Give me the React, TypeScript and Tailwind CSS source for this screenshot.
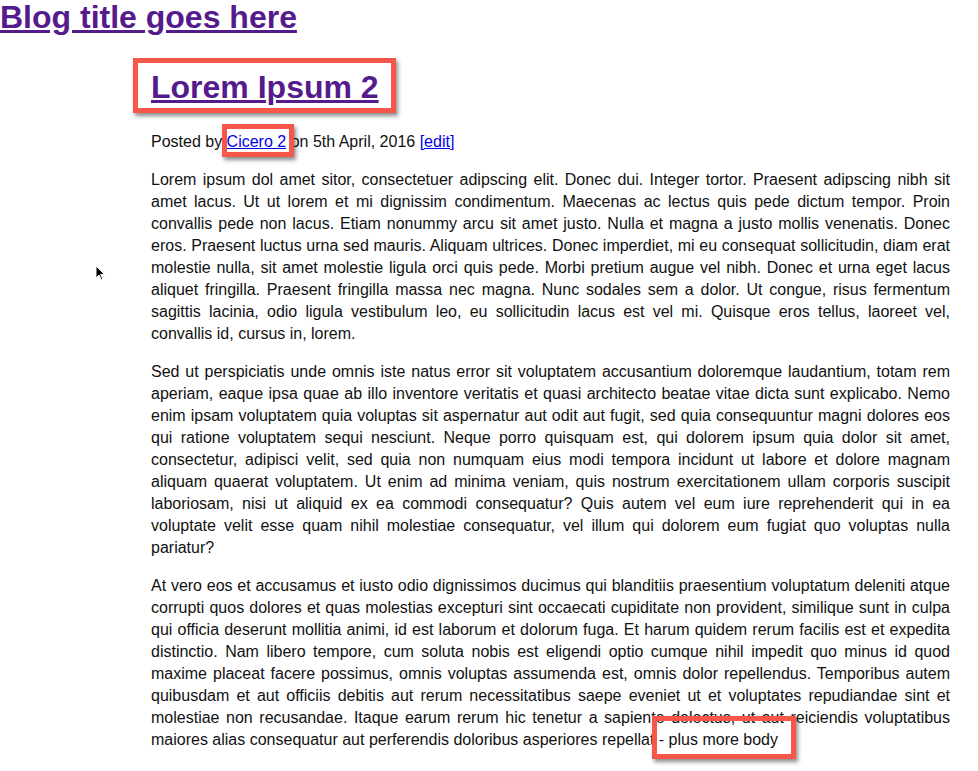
import React from "react"

function Callout({ className }: { className: string }) {
  return (
    <span
      aria-hidden
      className={`pointer-events-none absolute border-[5px] border-[#f7574a] shadow-[2px_3px_4px_rgba(0,0,0,0.45)] ${className}`}
    />
  )
}

const paragraphs = [
  "Lorem ipsum dol amet sitor, consectetuer adipscing elit. Donec dui. Integer tortor. Praesent adipscing nibh sit amet lacus. Ut ut lorem et mi dignissim condimentum. Maecenas ac lectus quis pede dictum tempor. Proin convallis pede non lacus. Etiam nonummy arcu sit amet justo. Nulla et magna a justo mollis venenatis. Donec eros. Praesent luctus urna sed mauris. Aliquam ultrices. Donec imperdiet, mi eu consequat sollicitudin, diam erat molestie nulla, sit amet molestie ligula orci quis pede. Morbi pretium augue vel nibh. Donec et urna eget lacus aliquet fringilla. Praesent fringilla massa nec magna. Nunc sodales sem a dolor. Ut congue, risus fermentum sagittis lacinia, odio ligula vestibulum leo, eu sollicitudin lacus est vel mi. Quisque eros tellus, laoreet vel, convallis id, cursus in, lorem.",
  "Sed ut perspiciatis unde omnis iste natus error sit voluptatem accusantium doloremque laudantium, totam rem aperiam, eaque ipsa quae ab illo inventore veritatis et quasi architecto beatae vitae dicta sunt explicabo. Nemo enim ipsam voluptatem quia voluptas sit aspernatur aut odit aut fugit, sed quia consequuntur magni dolores eos qui ratione voluptatem sequi nesciunt. Neque porro quisquam est, qui dolorem ipsum quia dolor sit amet, consectetur, adipisci velit, sed quia non numquam eius modi tempora incidunt ut labore et dolore magnam aliquam quaerat voluptatem. Ut enim ad minima veniam, quis nostrum exercitationem ullam corporis suscipit laboriosam, nisi ut aliquid ex ea commodi consequatur? Quis autem vel eum iure reprehenderit qui in ea voluptate velit esse quam nihil molestiae consequatur, vel illum qui dolorem eum fugiat quo voluptas nulla pariatur?",
]

const lastParagraph =
  "At vero eos et accusamus et iusto odio dignissimos ducimus qui blanditiis praesentium voluptatum deleniti atque corrupti quos dolores et quas molestias excepturi sint occaecati cupiditate non provident, similique sunt in culpa qui officia deserunt mollitia animi, id est laborum et dolorum fuga. Et harum quidem rerum facilis est et expedita distinctio. Nam libero tempore, cum soluta nobis est eligendi optio cumque nihil impedit quo minus id quod maxime placeat facere possimus, omnis voluptas assumenda est, omnis dolor repellendus. Temporibus autem quibusdam et aut officiis debitis aut rerum necessitatibus saepe eveniet ut et voluptates repudiandae sint et molestiae non recusandae. Itaque earum rerum hic tenetur a sapiente delectus, ut aut reiciendis voluptatibus maiores alias consequatur aut perferendis doloribus asperiores repellat"

export default function App() {
  return (
    <div className="relative min-h-screen bg-white text-[#111] font-['Liberation_Sans',Arial,sans-serif]">
      <h1 className="text-[32px] font-bold leading-[34px]">
        <a href="#" className="text-[#551a8b] underline">
          Blog title goes here
        </a>
      </h1>

      <article className="ml-[151px] w-[799px]">
        <h2 className="relative mt-[29px] inline-block text-[32px] font-bold leading-normal">
          <a href="#" className="text-[#551a8b] underline">
            Lorem Ipsum 2
          </a>
          <Callout className="-left-[18px] -right-[17px] -top-[5px] -bottom-[2px]" />
        </h2>

        <p className="mt-[20px] text-base leading-[22px]">
          Posted by{" "}
          <span className="relative">
            <a href="#" className="text-[#0000ee] underline">
              Cicero 2
            </a>
            <Callout className="-left-[5px] -right-[8px] -top-[9px] -bottom-[7px]" />
          </span>{" "}
          on 5th April, 2016{" "}
          <a href="#" className="text-[#0000ee] underline">
            [edit]
          </a>
        </p>

        {paragraphs.map((text, i) => (
          <p key={i} className="mt-4 text-justify text-base leading-[22px]">
            {text}
          </p>
        ))}

        <p className="mt-4 text-justify text-base leading-[22px]">
          {lastParagraph}{" "}
          <span className="relative">
            - plus more body
            <Callout className="-left-[7px] -right-[18px] -top-[15px] -bottom-[11px]" />
          </span>
        </p>
      </article>

      {/* mouse pointer left in the capture */}
      <svg className="absolute left-[95px] top-[265px]" width="11" height="16" viewBox="0 0 11 16">
        <path d="M1 1 L1 13 L4 10 L6.5 15 L8 14.3 L5.6 9.4 L9.6 9.4 Z" fill="#000" stroke="#fff" strokeWidth="1" />
      </svg>
    </div>
  )
}
